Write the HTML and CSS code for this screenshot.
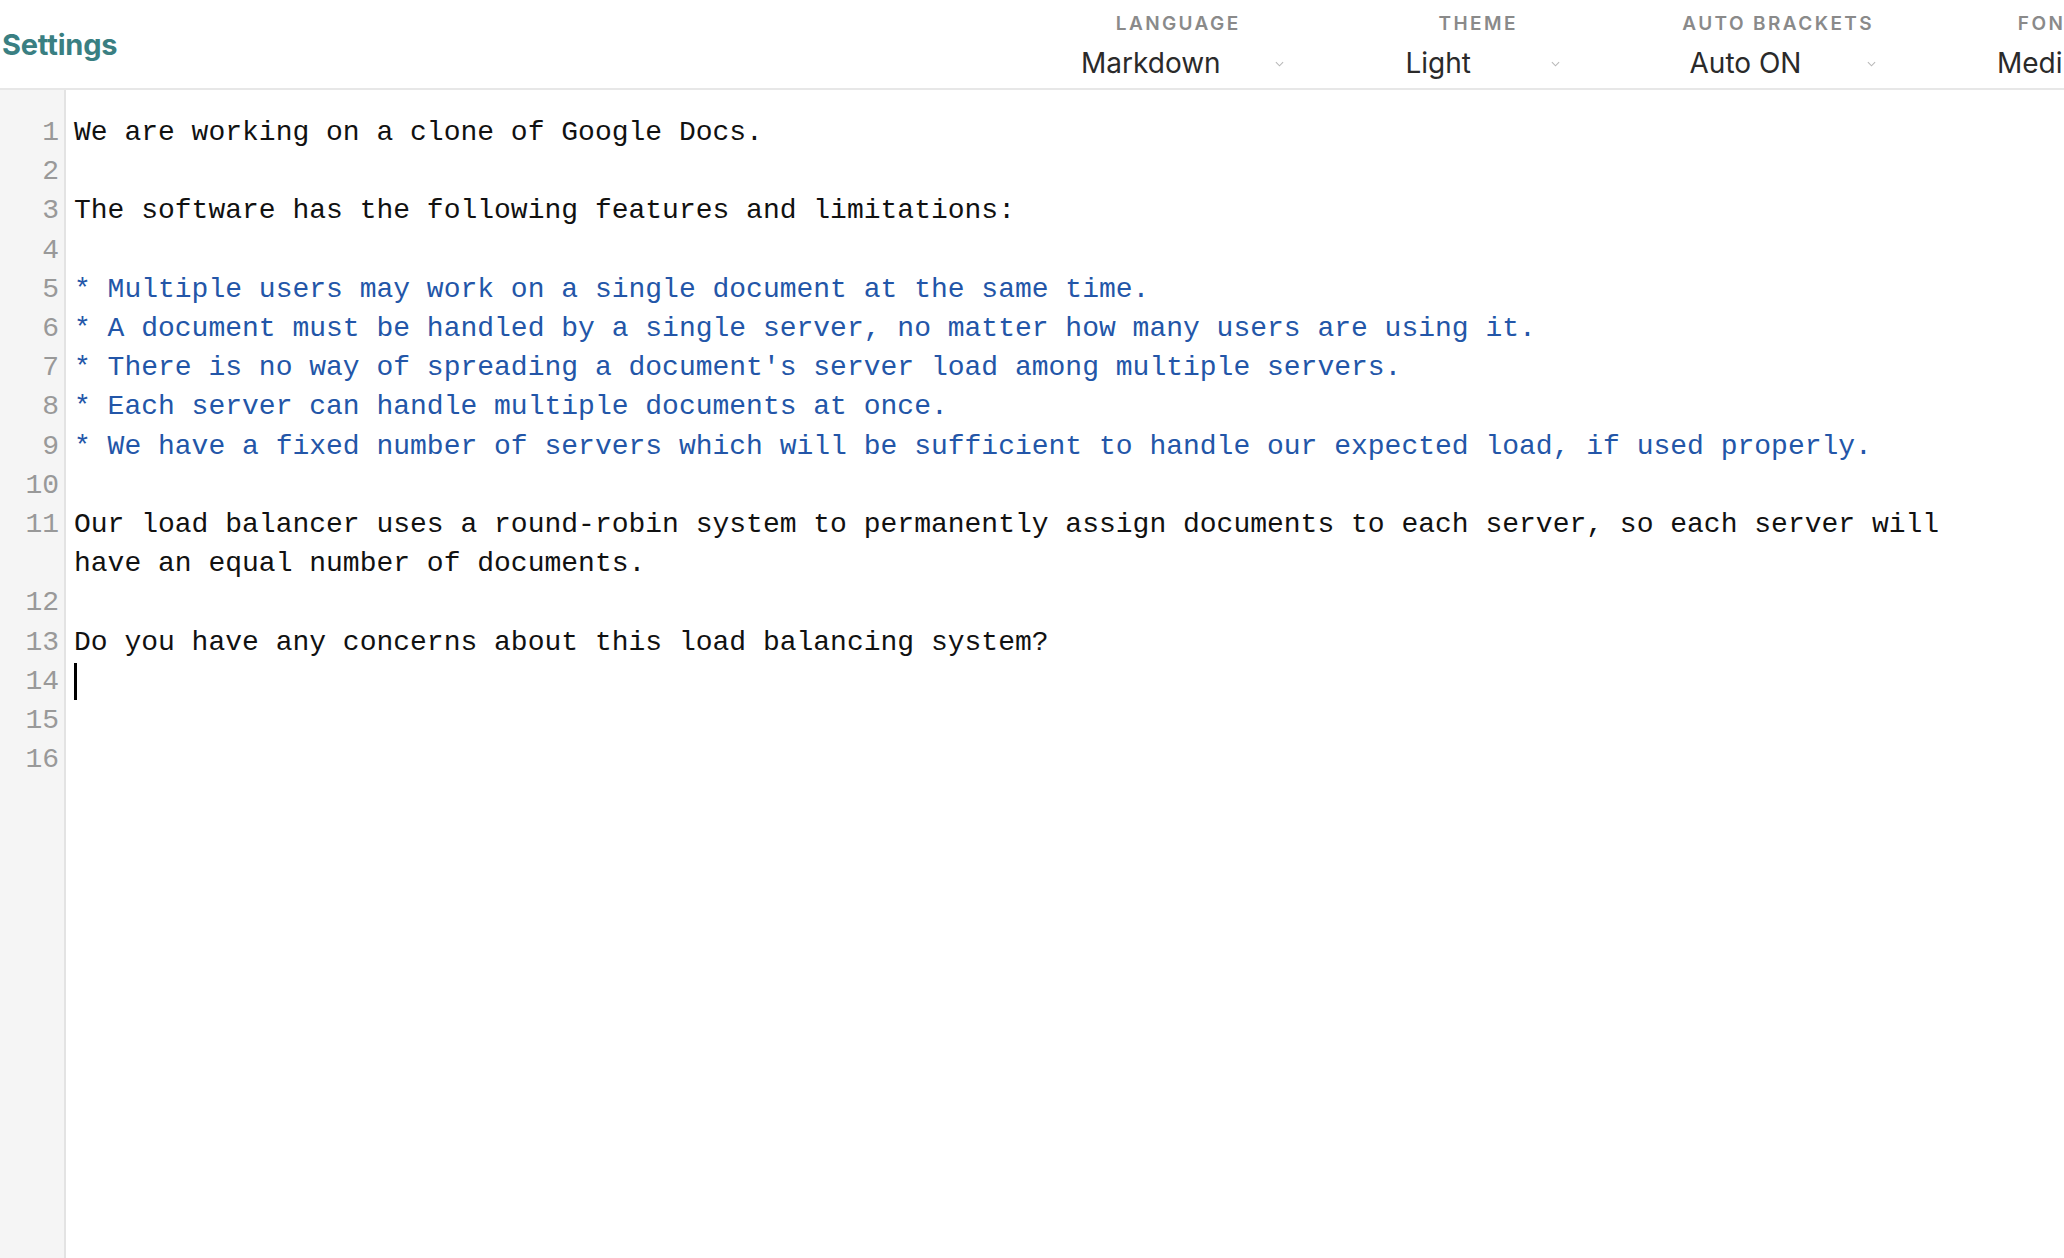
FILE: index.html
```html
<!DOCTYPE html>
<html lang="en">
<head>
<meta charset="utf-8">
<title>Settings</title>
<link rel="stylesheet" href="styles.css">
</head>
<body>
<header class="topbar">
  <h1 class="title">Settings</h1>
  <div class="options">
    <div class="option">
      <span class="option-label">Language</span>
      <div class="select select-lang"><span>Markdown</span><svg class="chev" viewBox="0 0 10 6"><polyline points="1,1 5,5 9,1"/></svg></div>
    </div>
    <div class="option">
      <span class="option-label">Theme</span>
      <div class="select select-theme"><span>Light</span><svg class="chev" viewBox="0 0 10 6"><polyline points="1,1 5,5 9,1"/></svg></div>
    </div>
    <div class="option">
      <span class="option-label">Auto Brackets</span>
      <div class="select select-brackets"><span>Auto ON</span><svg class="chev" viewBox="0 0 10 6"><polyline points="1,1 5,5 9,1"/></svg></div>
    </div>
    <div class="option">
      <span class="option-label">Font Size</span>
      <div class="select select-font"><span>Medium</span><svg class="chev" viewBox="0 0 10 6"><polyline points="1,1 5,5 9,1"/></svg></div>
    </div>
  </div>
</header>
<main class="editor">
  <div class="ln">1</div><div class="code">We are working on a clone of Google Docs.</div>
  <div class="ln">2</div><div class="code"></div>
  <div class="ln">3</div><div class="code">The software has the following features and limitations:</div>
  <div class="ln">4</div><div class="code"></div>
  <div class="ln">5</div><div class="code md-list">* Multiple users may work on a single document at the same time.</div>
  <div class="ln">6</div><div class="code md-list">* A document must be handled by a single server, no matter how many users are using it.</div>
  <div class="ln">7</div><div class="code md-list">* There is no way of spreading a document's server load among multiple servers.</div>
  <div class="ln">8</div><div class="code md-list">* Each server can handle multiple documents at once.</div>
  <div class="ln">9</div><div class="code md-list">* We have a fixed number of servers which will be sufficient to handle our expected load, if used properly.</div>
  <div class="ln">10</div><div class="code"></div>
  <div class="ln">11</div><div class="code">Our load balancer uses a round-robin system to permanently assign documents to each server, so each server will have an equal number of documents.</div>
  <div class="ln">12</div><div class="code"></div>
  <div class="ln">13</div><div class="code">Do you have any concerns about this load balancing system?</div>
  <div class="ln">14</div><div class="code"><span class="caret"></span></div>
  <div class="ln">15</div><div class="code"></div>
  <div class="ln">16</div><div class="code"></div>
</main>
</body>
</html>
```
FILE: styles.css
```css
* { box-sizing: border-box; }

html, body {
  margin: 0;
  padding: 0;
  height: 100%;
  background: #fff;
}

body {
  display: flex;
  flex-direction: column;
  overflow: hidden;
  font-family: Inter, "Noto Sans", sans-serif;
}

.topbar {
  flex: 0 0 auto;
  height: 90px;
  display: flex;
  align-items: center;
  padding-left: 2px;
  padding-top: 2px;
  border-bottom: 2px solid #e7e7e7;
  overflow: hidden;
}

.title {
  flex: 0 0 1025px;
  margin: 0;
  font-size: 29px;
  line-height: 36px;
  font-weight: 700;
  color: #3a7f82;
  letter-spacing: -0.2px;
}

.options {
  display: flex;
  align-self: stretch;
  flex-shrink: 0;
  margin-top: -2px;
}

.option {
  width: 300px;
  flex-shrink: 0;
  display: flex;
  flex-direction: column;
  align-items: center;
  padding-top: 12px;
}

.option-label {
  font-size: 19px;
  line-height: 24px;
  font-weight: 600;
  text-transform: uppercase;
  letter-spacing: 2.4px;
  color: #8a8a8a;
  padding-left: 2.4px;
}

.select {
  margin-top: 10px;
  display: flex;
  align-items: center;
  justify-content: space-between;
  padding-left: 11px;
  font-size: 28px;
  line-height: 34px;
  color: #2a2a2a;
}

.select-lang { width: 214px; }
.select-theme { width: 165px; }
.select-brackets { width: 197px; }
.select-font { width: 182px; }

.chev {
  width: 9px;
  height: 6px;
  margin-top: 2px;
  fill: none;
  stroke: #b8b8b8;
  stroke-width: 1.2;
}

.editor {
  flex: 1 1 auto;
  display: grid;
  grid-template-columns: 66px 1fr;
  align-content: start;
  padding-top: 23px;
  background: linear-gradient(to right, #f5f5f5 0 64px, #e3e3e3 64px 66px, #fff 66px);
  font-family: "Liberation Mono", "DejaVu Sans Mono", monospace;
  font-size: 28px;
  line-height: 39.2px;
}

.ln {
  text-align: right;
  padding-right: 7px;
  color: #999;
}

.code {
  padding-left: 8px;
  padding-right: 90px;
  white-space: pre-wrap;
  color: #111;
}

.md-list {
  color: #2356a8;
}

.caret {
  display: inline-block;
  width: 3px;
  height: 37px;
  background: #000;
  vertical-align: middle;
}
```
